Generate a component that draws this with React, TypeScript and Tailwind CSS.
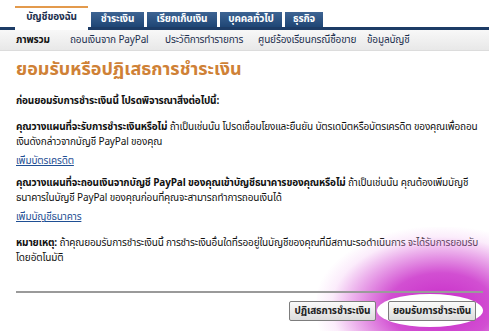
import React from "react";

const TABS = [
  { label: "บัญชีของฉัน", w: "w-[73px]", active: true },
  { label: "ชำระเงิน", w: "w-[53px]" },
  { label: "เรียกเก็บเงิน", w: "w-[70px]" },
  { label: "บุคคลทั่วไป", w: "w-[62px]" },
  { label: "ธุรกิจ", w: "w-[38px]" },
];

const SUBNAV = [
  { label: "ภาพรวม", bold: true, w: "w-[54px]" },
  { label: "ถอนเงินจาก PayPal", w: "w-[95px]" },
  { label: "ประวัติการทำรายการ", w: "w-[93px]" },
  { label: "ศูนย์ร้องเรียนกรณีซื้อขาย", w: "w-[109px]" },
  { label: "ข้อมูลบัญชี", w: "w-[50px]" },
];

const font = { fontFamily: 'Tahoma, "Noto Sans Thai", "Noto Sans", "DejaVu Sans", sans-serif' };

export default function App() {
  return (
    <div
      className="relative h-[331px] w-[489px] overflow-hidden bg-white text-[10px] leading-[15px] tracking-[-0.15px] text-[#111]"
      style={font}
    >
      {/* ─── tab row ─── */}
      <div className="flex h-[27px] items-end gap-[3px] pl-[15px]">
        {TABS.map((t) =>
          t.active ? (
            <div
              key={t.label}
              className={`${t.w} flex h-[21px] items-center justify-center border-t-2 border-[#e39a4c] bg-white font-bold text-[#1c2f4e]`}
            >
              {t.label}
            </div>
          ) : (
            <div
              key={t.label}
              className={`${t.w} flex h-[15px] items-center justify-center bg-gradient-to-b from-[#3d6493] to-[#1f4675] font-bold text-white`}
            >
              {t.label}
            </div>
          )
        )}
      </div>
      <div className="flex h-[3px]">
        <div className="w-[15px] bg-[#1d3c66]" />
        <div className="w-[73px] bg-white" />
        <div className="flex-1 bg-[#1d3c66]" />
      </div>

      {/* ─── sub navigation ─── */}
      <div className="flex h-[21px] items-center border-b border-[#dcdcdc] bg-gradient-to-b from-[#f8f8f8] to-[#e8e8e8] pl-[16px] text-[#1c2f4e]">
        {SUBNAV.map((s) => (
          <span key={s.label} className={`${s.w} whitespace-nowrap ${s.bold ? "font-bold text-[#111]" : ""}`}>
            {s.label}
          </span>
        ))}
      </div>

      {/* ─── content ─── */}
      <div className="pl-[16px] pr-[6px]">
        <h1 className="mt-[6px] text-[18px] font-bold leading-[26px] tracking-normal text-[#cf8136]">
          ยอมรับหรือปฏิเสธการชำระเงิน
        </h1>

        <p className="mt-[11px] font-bold">ก่อนยอมรับการชำระเงินนี้ โปรดพิจารณาสิ่งต่อไปนี้:</p>

        <p className="mt-[11px]">
          <b>คุณวางแผนที่จะรับการชำระเงินหรือไม่</b> ถ้าเป็นเช่นนั้น โปรดเชื่อมโยงและยืนยัน บัตรเดบิตหรือบัตรเครดิต ของคุณเพื่อถอนเงินดังกล่าวจากบัญชี PayPal ของคุณ
        </p>
        <a href="#" className="mt-[4px] block text-[#1f4f94] underline">
          เพิ่มบัตรเครดิต
        </a>

        <p className="mt-[7px]">
          <b>คุณวางแผนที่จะถอนเงินจากบัญชี PayPal ของคุณเข้าบัญชีธนาคารของคุณหรือไม่</b> ถ้าเป็นเช่นนั้น คุณต้องเพิ่มบัญชีธนาคารในบัญชี PayPal ของคุณก่อนที่คุณจะสามารถทำการถอนเงินได้
        </p>
        <a href="#" className="mt-[4px] block text-[#1f4f94] underline">
          เพิ่มบัญชีธนาคาร
        </a>

        <p className="mt-[11px]">
          <b>หมายเหตุ:</b> ถ้าคุณยอมรับการชำระเงินนี้ การชำระเงินอื่นใดที่รออยู่ในบัญชีของคุณที่มีสถานะรอดำเนินการ จะได้รับการยอมรับโดยอัตโนมัติ
        </p>

        <div className="relative mt-[25px]">
          {/* magenta highlight glow behind accept button */}
          <div
            className="pointer-events-none absolute left-[300px] top-[-64px] h-[160px] w-[250px] rounded-full"
            style={{
              background:
                "radial-gradient(ellipse at center, rgba(200,40,200,1) 0%, rgba(205,60,205,0.9) 30%, rgba(220,110,220,0.55) 50%, rgba(240,180,240,0.25) 62%, rgba(255,255,255,0) 72%)",
            }}
          />
          <div className="relative h-[2px] bg-[#9a9a9a]" />
          <div className="relative mt-[8px] flex justify-end gap-[12px] pr-[7px]">
            <button className="h-[20px] w-[87px] rounded-[2px] border border-[#7d7d7d] bg-gradient-to-b from-[#fafafa] to-[#dcdcdc] text-[10px] font-bold text-[#222]">
              ปฏิเสธการชำระเงิน
            </button>
            <div className="relative">
              <div className="absolute left-[-11px] top-[-7px] h-[33px] w-[106px] rounded-[50%] bg-white" />
              <button className="relative h-[20px] w-[88px] rounded-[2px] border border-[#7d7d7d] bg-gradient-to-b from-[#fafafa] to-[#dcdcdc] text-[10px] font-bold text-[#222]">
                ยอมรับการชำระเงิน
              </button>
            </div>
          </div>
        </div>
      </div>
    </div>
  );
}
